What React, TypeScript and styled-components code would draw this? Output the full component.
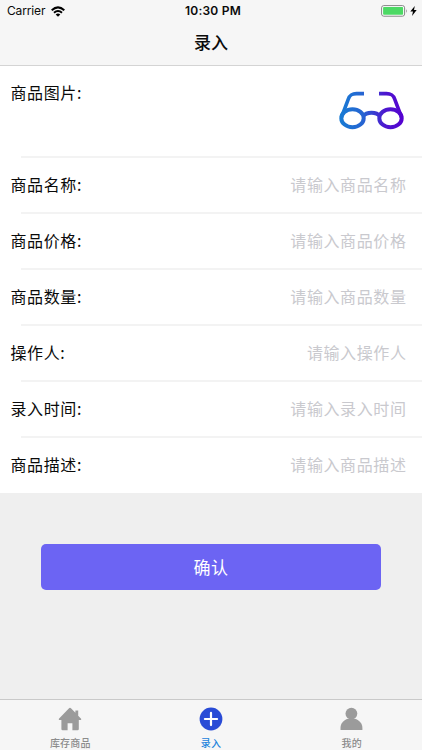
import React from "react";
import styled, { createGlobalStyle } from "styled-components";

const GlobalStyle = createGlobalStyle`
  * { box-sizing: border-box; }
  body { margin: 0; background: #efefef; }
  input, button { font: inherit; letter-spacing: inherit; border: 0; padding: 0; margin: 0; }
`;

const Screen = styled.div`
  width: 422px;
  height: 750px;
  display: flex;
  flex-direction: column;
  overflow: hidden;
  background: #efefef;
  color: #0a0a0a;
  font-family: Inter, "Noto Sans CJK SC", sans-serif;
`;

const Header = styled.header`
  height: 66px;
  flex: none;
  background: #f6f6f6;
  border-bottom: 1px solid #d4d4d4;
`;

const StatusBar = styled.div`
  height: 22px;
  display: grid;
  grid-template-columns: 1fr auto 1fr;
  align-items: center;
  padding: 0 5px 0 7px;
  font-size: 12px;
  line-height: 22px;
`;

const Carrier = styled.div`
  display: flex;
  align-items: center;
  gap: 6px;
  letter-spacing: -0.15px;
`;

const Clock = styled.div`
  font-weight: 600;
  letter-spacing: 0.25px;
  padding-left: 2px;
`;

const Power = styled.div`
  display: flex;
  align-items: center;
  justify-content: flex-end;
  gap: 2px;
`;

const Title = styled.h1`
  margin: 0;
  height: 43px;
  line-height: 40px;
  text-align: center;
  font-size: 17px;
  font-weight: 500;
  font-family: "Noto Sans CJK SC", sans-serif;
`;

const Form = styled.form`
  margin: 0;
  flex: 1;
  display: flex;
  flex-direction: column;
  font-family: "Noto Sans CJK SC", sans-serif;
  font-size: 16px;
  letter-spacing: 0.6px;
`;

const Row = styled.label<{ $tall?: boolean; $last?: boolean }>`
  height: ${(p) => (p.$tall ? 92 : p.$last ? 55 : 56)}px;
  flex: none;
  display: flex;
  align-items: ${(p) => (p.$tall ? "flex-start" : "center")};
  justify-content: space-between;
  padding: ${(p) =>
    p.$tall ? "14px 17px 0 10.5px" : p.$last ? "0 15.5px 3px 10.5px" : "0 15.5px 4px 10.5px"};
  background: ${(p) =>
    p.$last
      ? "#fff"
      : "linear-gradient(#f3f3f3, #f3f3f3) 21px 100% / 100% 2px no-repeat #fff"};
`;

const Label = styled.span`
  line-height: 24px;
  white-space: nowrap;
`;

const Field = styled.input`
  width: 220px;
  height: 28px;
  background: transparent;
  text-align: right;
  outline: none;
  &::placeholder { color: #c9c9ce; opacity: 1; }
`;

const Thumb = styled.svg`
  margin-top: 10px;
`;

const Confirm = styled.button`
  width: 340px;
  height: 46px;
  margin: 51px 0 0 41px;
  border-radius: 5px;
  background: #6c64f3;
  color: #fff;
  && {
    font-size: 17px;
    padding-bottom: 2px;
  }
`;

const TabBar = styled.nav`
  height: 51px;
  flex: none;
  display: grid;
  grid-template-columns: repeat(3, 1fr);
  background: #f6f6f6;
  border-top: 1px solid #c9c9c9;
`;

const Tab = styled.div<{ $active?: boolean }>`
  display: flex;
  flex-direction: column;
  align-items: center;
  padding-top: 7px;
  color: ${(p) => (p.$active ? "#1b83dc" : "#8c8c8c")};
  font-family: "Noto Sans CJK SC", sans-serif;
  font-size: 10px;
  font-weight: 500;
  line-height: 14px;
  letter-spacing: 0.2px;
`;

const TabIcon = styled.svg`
  display: block;
  margin-bottom: 5px;
`;

const fields = [
  ["商品名称:", "请输入商品名称"],
  ["商品价格:", "请输入商品价格"],
  ["商品数量:", "请输入商品数量"],
  ["操作人:", "请输入操作人"],
  ["录入时间:", "请输入录入时间"],
  ["商品描述:", "请输入商品描述"],
];

const WifiIcon = () => (
  <svg width="14" height="11" viewBox="0 0 14 11">
    <path d="M.7 4.2Q7-1.4 13.3 4.2M3 6.7Q7 3.2 11 6.7" fill="none" stroke="#000" strokeWidth="2" />
    <path d="M4.7 8.4Q7 6.6 9.3 8.4L7 10.7Z" fill="#000" />
  </svg>
);

const BatteryIcon = () => (
  <svg width="27" height="12" viewBox="0 0 27 12">
    <rect x=".6" y=".6" width="23" height="10.6" rx="2.2" fill="#fff" stroke="#858585" />
    <rect x="2.1" y="2" width="20" height="7.8" rx=".8" fill="#4cd964" />
    <path d="M25 4Q26.6 6 25 8Z" fill="#858585" />
  </svg>
);

const BoltIcon = () => (
  <svg width="7" height="10" viewBox="0 0 7 10">
    <path d="M4.8 0 0.3 5.6H3L2 10 6.7 4.1H4Z" fill="#000" />
  </svg>
);

const Glasses = () => (
  <Thumb width="66" height="40" viewBox="0 0 66 40">
    <defs>
      <linearGradient id="glasses" gradientUnits="userSpaceOnUse" x1="1" y1="0" x2="65" y2="0">
        <stop offset="0" stopColor="#187bd4" />
        <stop offset=".36" stopColor="#2664d2" />
        <stop offset=".7" stopColor="#4c17cf" />
        <stop offset="1" stopColor="#5600d0" />
      </linearGradient>
    </defs>
    <g fill="none" stroke="url(#glasses)" strokeWidth="4">
      <ellipse cx="13.5" cy="28.2" rx="11.2" ry="9" />
      <ellipse cx="51.5" cy="28.2" rx="11.2" ry="9" />
      <path d="M24 26.2C27.5 21.5 37.5 21.5 41 26.2" />
      <path d="M25 3.6H17.5C12.5 3.6 10.8 5.2 9.3 9.2L2.4 27.5" strokeWidth="3.6" />
      <path d="M40 3.6H47.5C52.5 3.6 54.2 5.2 55.7 9.2L62.6 27.5" strokeWidth="3.6" />
    </g>
  </Thumb>
);

export default function App() {
  return (
    <>
      <GlobalStyle />
      <Screen>
        <Header>
          <StatusBar>
            <Carrier>Carrier <WifiIcon /></Carrier>
            <Clock>10:30 PM</Clock>
            <Power><BatteryIcon /><BoltIcon /></Power>
          </StatusBar>
          <Title>录入</Title>
        </Header>
        <Form>
          <Row $tall>
            <Label>商品图片:</Label>
            <Glasses />
          </Row>
          {fields.map(([label, hint], i) => (
            <Row key={label} $last={i === fields.length - 1}>
              <Label>{label}</Label>
              <Field placeholder={hint} />
            </Row>
          ))}
          <Confirm type="button">确认</Confirm>
        </Form>
        <TabBar>
          <Tab>
            <TabIcon width="24" height="24" viewBox="0 0 24 24">
              <path d="M12 .8 Q11.4.8 10.8 1.4L.9 11.8Q.4 13 1.4 13H3.4V22Q3.4 23.2 4.6 23.2H9.6V16.2H14.4V23.2H19.6Q20.8 23.2 20.8 22V13H22.6Q23.6 13 23.1 11.8L20.2 8.8V3.4H17.4V5.8L13.2 1.4Q12.6.8 12 .8Z" fill="#9b9b9b" />
            </TabIcon>
            库存商品
          </Tab>
          <Tab $active>
            <TabIcon width="24" height="24" viewBox="0 0 24 24">
              <circle cx="12" cy="12" r="11.4" fill="#294bd6" />
              <path d="M12 5.9V18.1M5.9 12H18.1" stroke="#fff" strokeWidth="2.2" strokeLinecap="round" />
            </TabIcon>
            录入
          </Tab>
          <Tab>
            <TabIcon width="24" height="24" viewBox="0 0 24 24">
              <circle cx="11.4" cy="6.6" r="5.9" fill="#9b9b9b" />
              <path d="M.5 23V21C.5 16 4 13.3 7.8 11.8H15C18.8 13.3 22.4 16 22.4 21V23Z" fill="#9b9b9b" />
            </TabIcon>
            我的
          </Tab>
        </TabBar>
      </Screen>
    </>
  );
}
